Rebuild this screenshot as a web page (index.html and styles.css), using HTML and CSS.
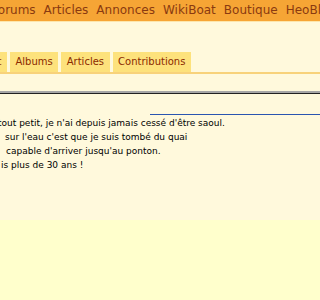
FILE: index.html
```html
<!DOCTYPE html>
<html lang="fr">
<head>
<meta charset="utf-8">
<link rel="stylesheet" href="styles.css">
</head>
<body>
<div class="page">
  <header class="topbar">
    <nav class="mainnav">
      <a>Forums</a><a>Articles</a><a>Annonces</a><a>WikiBoat</a><a>Boutique</a><a>HeoBlog</a>
    </nav>
  </header>
  <div class="tabs">
    <span class="tab">Chat</span><span class="tab">Albums</span><span class="tab">Articles</span><span class="tab">Contributions</span>
  </div>
  <div class="rule"></div>
  <div class="content">
    <div class="bar"></div>
    <div class="line l1">tout petit, je n'ai depuis jamais cessé d'être saoul.</div>
    <div class="line l2">sur l'eau c'est que je suis tombé du quai</div>
    <div class="line l3">capable d'arriver jusqu'au ponton.</div>
    <div class="line l4">is plus de 30 ans !</div>
  </div>
</div>
</body>
</html>
```
FILE: styles.css
```css
html, body { margin: 0; padding: 0; }
body { background: #ffffcc; font-family: "DejaVu Sans", Verdana, sans-serif; overflow: hidden; }
.page { background: #fff9dc; height: 220px; overflow: hidden; }
.topbar { background: #f6a535; height: 21px; border-bottom: 1px solid #fde6ab; overflow: hidden; }
.mainnav { display: flex; gap: 8px; margin-left: -8.7px; font-size: 12px; line-height: 21px; white-space: nowrap; }
.mainnav a { color: #8a3a10; }
.tabs { display: flex; gap: 3px; margin-top: 30px; margin-left: -27.4px; border-bottom: 2px solid #f8d27a; white-space: nowrap; }
.tab { background: #fde27c; color: #8b2a00; font-size: 10px; height: 20px; line-height: 20px; padding: 0 5.5px; box-sizing: border-box; }
.rule { margin-top: 17px; height: 2px; background: #a6a6a6; border-bottom: 1px solid #222; }
.content { padding-top: 22px; position: relative; font-size: 9px; color: #000; display: flex; flex-direction: column; align-items: flex-start; }
.bar { position: absolute; left: 150px; right: 0; top: 20px; height: 1px; background: #2a55b0; }
.line { line-height: 14px; white-space: nowrap; }
.l1 { margin-left: -2px; }
.l2 { margin-left: 5px; }
.l3 { margin-left: 6px; }
.l4 { margin-left: 1px; }
```
